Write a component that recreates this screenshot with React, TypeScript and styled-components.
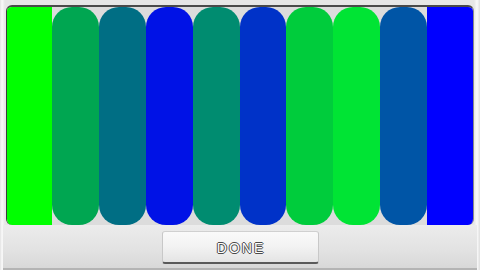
import React from "react";
import styled, { createGlobalStyle } from "styled-components";

const Global = createGlobalStyle`
  html, body { margin: 0; padding: 0; background: #e4e4e4; }
  #root { width: 480px; height: 270px; }
`;

const Screen = styled.div`
  width: 480px;
  height: 270px;
  box-sizing: border-box;
  display: flex;
  flex-direction: column;
  background: linear-gradient(to right, #e2e2e2 0px, #fafafa 2px, #e6e6e6 5px, #e6e6e6 474px, #fafafa 477px, #dedede 480px);
`;

const Top = styled.div`
  padding: 5px 6px 0 6px;
  height: 220px;
  box-sizing: content-box;
`;

const Panel = styled.div`
  height: 220px;
  box-sizing: border-box;
  border-top: 2px solid #4a4a4a;
  border-left: 1px solid #3c3c3c;
  border-right: 1px solid #8a8a8a;
  border-radius: 6px;
  overflow: hidden;
  background: #dcdcdc;
  display: flex;
`;

const Bar = styled.div<{ $c: string; $pill?: boolean; $w?: number }>`
  flex: ${(p) => (p.$w ? `0 0 ${p.$w}px` : "1")};
  background: ${(p) => p.$c};
  border-radius: ${(p) => (p.$pill ? "20px" : "0")};
`;

const Bottom = styled.div`
  flex: 1;
  display: flex;
  align-items: flex-start;
  justify-content: center;
  padding-top: 6px;
  box-sizing: border-box;
  margin: 0 3px 0 3px;
  border-bottom: 2px solid #b4b4b4;
  background: linear-gradient(to bottom, #ececec 0%, #e2e2e2 60%, #d8d8d8 100%);
`;

const Button = styled.button`
  width: 157px;
  height: 33px;
  box-sizing: border-box;
  border: 1px solid #c8c8c8;
  border-bottom: 2px solid #5a5a5a;
  border-top: 1px solid #d0d0d0;
  border-radius: 3px;
  background: linear-gradient(to bottom, #fafafa 0%, #f2f2f2 50%, #e4e4e4 100%);
  display: flex;
  align-items: center;
  justify-content: center;
  padding: 1px 0 0 2px;
  font-family: "Liberation Sans", "DejaVu Sans", sans-serif;
  font-size: 14px;
  font-weight: normal;
  letter-spacing: 2px;
  color: #ffffff;
  text-shadow: 1px 0 0 #4a4a4a, -1px 0 0 #4a4a4a, 0 1px 0 #4a4a4a, 0 -1px 0 #4a4a4a;
`;

const colors = [
  "#00a651",
  "#006e84",
  "#0012e6",
  "#008c70",
  "#0032c8",
  "#00cc3c",
  "#00e434",
  "#0055a6",
];

export default function App() {
  return (
    <>
      <Global />
      <Screen>
        <Top>
          <Panel>
            <Bar $c="#00ff00" $w={45} />
            {colors.map((c, i) => (
              <Bar key={i} $c={c} $pill />
            ))}
            <Bar $c="#0000ff" $w={46} />
          </Panel>
        </Top>
        <Bottom>
          <Button>DONE</Button>
        </Bottom>
      </Screen>
    </>
  );
}
